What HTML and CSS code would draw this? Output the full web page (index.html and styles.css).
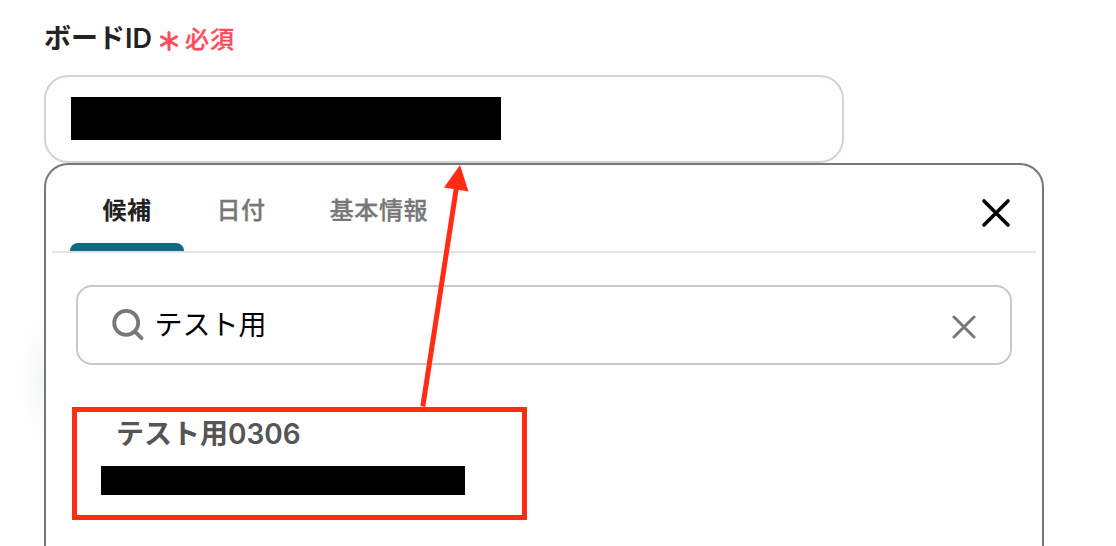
FILE: index.html
```
<!DOCTYPE html>
<html lang="ja">

<head>
    <meta charset="UTF-8">
    <meta name="viewport" content="width=device-width, initial-scale=1.0">
    <title>ボードID</title>
    <link rel="stylesheet" href="styles.css">
</head>

<body>
    <div class="field">
        <div class="field-label">
            <span class="label-text">ボードID</span>
            <svg class="required-icon" width="18" height="20" viewBox="0 0 18 20">
                <path d="M9 1.5v17M1.5 5.8l15 8.4M16.5 5.8l-15 8.4" />
            </svg>
            <span class="required-text">必須</span>
        </div>
        <div class="field-input">
            <div class="mask"></div>
        </div>
    </div>

    <div class="panel-wrap">
        <div class="glow"></div>
        <div class="panel">
            <div class="tabs">
                <div class="tab active">候補</div>
                <div class="tab">日付</div>
                <div class="tab">基本情報</div>
                <svg class="close-icon" width="32" height="32" viewBox="0 0 32 32">
                    <path d="M4 4l24 24M28 4L4 28" />
                </svg>
            </div>

            <div class="search">
                <svg class="search-icon" width="34" height="34" viewBox="0 0 34 34">
                    <circle cx="15.2" cy="14.8" r="12" />
                    <path d="M23.5 23.2l7 7" />
                </svg>
                <span class="search-text">テスト用</span>
                <svg class="clear-icon" width="24" height="24" viewBox="0 0 24 24">
                    <path d="M2 2l20 20M22 2L2 22" />
                </svg>
            </div>

            <div class="result">
                <div class="result-name">テスト用0306</div>
                <div class="mask"></div>
            </div>
        </div>
    </div>

    <svg class="arrow" width="60" height="250" viewBox="0 0 60 250">
        <path class="arrow-line" d="M12.8 243.5L46.5 24" />
        <path class="arrow-head" d="M50 2L58.5 28.5L34 24.5z" />
    </svg>
</body>

</html>
```

FILE: styles.css
```
body {
    margin: 0;
    height: 546px;
    overflow: hidden;
    position: relative;
    background-color: #fefefe;
    font-family: Inter, "Noto Sans CJK JP", sans-serif;
    color: #222;
}

svg {
    fill: none;
    stroke-linecap: round;
    flex-shrink: 0;
}

.field {
    width: 800px;
    padding: 20px 0 0 44px;
}

.field-label {
    display: flex;
    align-items: center;
    height: 36px;
    margin-bottom: 19px;
}

.label-text {
    margin-top: -3px;
    font-size: 27px;
    font-weight: 600;
}

.required-icon {
    margin: 5px 7px 0 8px;
    stroke: #ff4b5c;
    stroke-width: 3;
}

.required-text {
    margin-top: -1px;
    color: #ff4b5c;
    font-size: 24px;
    font-weight: 500;
    letter-spacing: 1px;
    -webkit-text-stroke: 0.3px #ff4b5c;
}

.field-input {
    box-sizing: border-box;
    height: 88px;
    padding: 20px 25px;
    border: 2px solid #d0d3dc;
    border-radius: 24px;
}

.mask {
    background-color: #000;
}

.field-input .mask {
    width: 430px;
    height: 43px;
}

.panel-wrap {
    position: relative;
    width: 1000px;
    margin-left: 44px;
}

/* soft shadow behind the left edge */
.glow {
    position: absolute;
    left: -24px;
    top: 154px;
    width: 52px;
    height: 124px;
    background: radial-gradient(closest-side, #f3f6f5, #fefefe);
}

.panel {
    position: relative;
    box-sizing: border-box;
    height: 383px;
    border: 2px solid #777;
    border-bottom: none;
    border-radius: 24px 24px 0 0;
    background-color: #fefefe;
}

.tabs {
    display: flex;
    height: 86px;
    margin: 0 6px;
    padding: 0 24px 0 18px;
    border-bottom: 2px solid #e4e4e4;
}

.tab {
    box-sizing: border-box;
    height: 86px;
    padding: 0 31.5px 0 32.5px;
    color: #777;
    font-size: 24px;
    font-weight: 500;
    letter-spacing: 0.6px;
    line-height: 92px;
    -webkit-text-stroke: 0.3px #777;
}

.tab.active {
    position: relative;
    width: 114px;
    color: #222;
    font-weight: 600;
    -webkit-text-stroke: 0;
}

.tab.active::after {
    content: "";
    position: absolute;
    left: 0;
    right: 0;
    bottom: 0;
    height: 8px;
    border-radius: 8px 8px 0 0;
    background-color: #0d6a82;
}

.close-icon {
    margin: 32px 0 0 auto;
    stroke: #000;
    stroke-width: 3.6;
}

.search {
    display: flex;
    align-items: center;
    box-sizing: border-box;
    height: 80px;
    margin: 32px 30px 0;
    padding: 0 34px 0 33px;
    border: 2px solid #c8c8c8;
    border-radius: 16px;
}

.search-icon {
    stroke: #777;
    stroke-width: 3.8;
}

.search-text {
    margin-left: 9.5px;
    color: #000;
    font-size: 28px;
    line-height: 40px;
}

.clear-icon {
    margin: 4px 0 0 auto;
    stroke: #777;
    stroke-width: 3;
}

.result {
    box-sizing: border-box;
    width: 455px;
    height: 113px;
    margin: 42px 0 0 26px;
    padding: 2px 0 0 24px;
    border: 5px solid #ff2b12;
}

.result-name {
    margin-left: 15px;
    color: #555;
    font-size: 28px;
    font-weight: 600;
    line-height: 40px;
}

.result .mask {
    width: 364px;
    height: 29px;
    margin-top: 12px;
}

/* drawn over the panel, from the result up to the field */
.arrow {
    position: absolute;
    left: 410px;
    top: 163px;
}

.arrow-line {
    stroke: #ff2b12;
    stroke-width: 5;
    stroke-linecap: butt;
}

.arrow-head {
    fill: #ff2b12;
}
```
